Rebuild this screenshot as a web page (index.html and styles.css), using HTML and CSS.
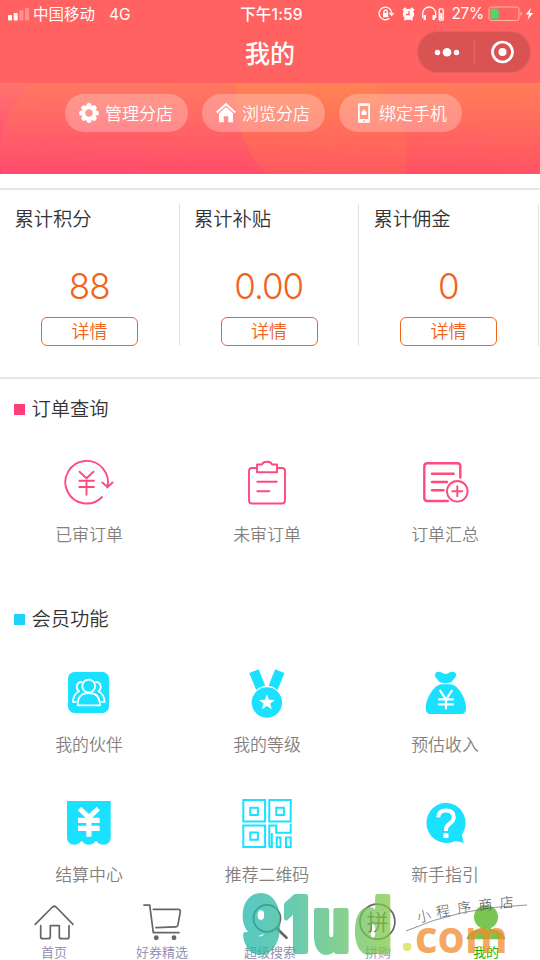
FILE: index.html
```
<!DOCTYPE html>
<html lang="zh-CN">
<head>
<meta charset="utf-8">
<title>我的</title>
<link rel="stylesheet" href="styles.css">
</head>
<body>
<div class="app">
  <header class="header">
    <div class="status">
      <div class="carrier">
        <svg width="22" height="14" viewBox="0 0 22 14" fill="#fff"><rect x="0" y="8" width="4" height="5.5" rx="1"/><rect x="5.7" y="6" width="4" height="7.5" rx="1"/><rect x="11.4" y="3.3" width="4" height="10.2" rx="1" opacity=".3"/><rect x="17" y="1" width="4" height="12.5" rx="1" opacity=".3"/></svg>
        <span>中国移动</span><span class="net">4G</span>
      </div>
      <div class="time">下午1:59</div>
      <div class="power">
        <svg class="sys" width="68" height="18" viewBox="0 0 68 18" fill="none" stroke="#fff" stroke-width="1.3">
          <path d="M11.5 13.2A6.3 6.3 0 1 1 13.7 8.5M11.5 7.8l2.2 2.4 2-2.4"/><rect x="5" y="7.8" width="5.2" height="4.4" fill="#fff" stroke="none"/><path d="M6 8V6.600a1.600 1.600 0 0 1 3.200 0V8"/>
          <circle cx="30.500" cy="9.300" r="5.600" fill="#fff" stroke="none"/><path d="M25 5.500l3-2.500M36 5.500l-3-2.500M26.500 15l1.500-1.500M34.500 15L33 13.500" stroke-width="2"/><path d="M31 6v3.500h-3" stroke="#ff6260"/>
          <path d="M44.700 13V8.500a6.500 6.500 0 0 1 13 0V13"/><path d="M46.800 10v5M55.700 10v5" stroke-width="2.400"/><rect x="61.200" y="3.800" width="4" height="11.400" rx="1"/><path d="M63.200 8v6" stroke-width="2"/>
        </svg>
        <span class="pct">27%</span>
        <svg width="47" height="16" viewBox="0 0 47 16"><rect x="1" y="1" width="30" height="13.500" rx="2.500" fill="none" stroke="#ffb3ad"/><rect x="2.600" y="2.700" width="8" height="10" rx="1" fill="#4cd964"/><path d="M32.500 5.500q3 2.200 0 4.500z" fill="#ffb3ad"/><path d="M43 2l-5.200 6.600h3.200L39.500 14l5.500-7h-3.300z" fill="#fff"/></svg>
      </div>
    </div>
    <div class="nav">
      <h1>我的</h1>
      <div class="capsule">
        <svg width="112" height="40" viewBox="1 0 112 40"><g fill="#fff"><circle cx="20.500" cy="20.500" r="2.700"/><circle cx="30" cy="20.200" r="4.300"/><circle cx="39.500" cy="20.500" r="2.700"/><circle cx="85.500" cy="20" r="4"/></g><path d="M57.300 8v24" stroke="#e66d6d"/><circle cx="85.500" cy="20" r="10" fill="none" stroke="#fff" stroke-width="2.700"/></svg>
      </div>
    </div>
  </header>

  <section class="banner">
    <button class="pill"><svg width="20" height="20" viewBox="0 0 20 20"><g stroke="#fff" stroke-width="5.200" stroke-linecap="round"><path d="M10 2.700v14.600M2.700 10h14.600M4.900 4.900l10.200 10.200M15.100 4.900L4.900 15.100"/></g><circle cx="10" cy="10" r="6.800" fill="#fff"/><circle cx="10" cy="10" r="3.700" fill="#ff9a90"/></svg><span>管理分店</span></button>
    <button class="pill"><svg width="20" height="20" viewBox="0 0 20 20"><path d="M.7 9.500L10 1.200l9.300 8.300" fill="none" stroke="#fff" stroke-width="2"/><path d="M3 10.200l7-6.300 7 6.300V19.200h-4.700v-6H7.700v6H3z" fill="#fff"/></svg><span>浏览分店</span></button>
    <button class="pill"><svg width="20" height="20" viewBox="0 0 20 20"><path d="M6.500.3h9q1.500 0 1.500 1.500v16.400q0 1.500-1.500 1.500h-9Q5 19.700 5 18.200V1.800Q5 .3 6.500.3zM6.800 3v13h8.400V3z" fill="#fff" fill-rule="evenodd"/><path d="M7.800 9.500L11 6.200l3.200 3.300h-.8V12H8.600V9.500z" fill="#fff"/><circle cx="11" cy="17.800" r=".9" fill="#ff9580"/></svg><span>绑定手机</span></button>
  </section>

  <section class="stats">
    <div class="stat"><h2>累计积分</h2><strong>88</strong><button>详情</button></div>
    <div class="stat"><h2>累计补贴</h2><strong>0.00</strong><button>详情</button></div>
    <div class="stat"><h2>累计佣金</h2><strong>0</strong><button>详情</button></div>
  </section>

  <section class="group orders">
    <h2>订单查询</h2>
    <div class="grid">
      <a class="item"><svg class="line" viewBox="0 0 60 60"><path d="M43 44A21.300 21.300 0 1 1 48.300 34.500M43.300 29.500l5.300 4.500 5-4.500M20.500 18.700l7 6.500 7-6.500M20.300 27.700h14.600M20.300 34h14.600M27.500 28v13.700"/></svg>已审订单</a>
      <a class="item"><svg class="line" viewBox="0 0 60 60"><path d="M20 15h-5q-3 0-3 3v29.500q0 3 3 3h30q3 0 3-3V18q0-3-3-3h-5"/><path d="M20 19.300v-7.800h5Q26 8.800 30 8.800t5 2.700h5v7.800zM20.300 28.700h19.500M20.300 38.300h12"/></svg>未审订单</a>
      <a class="item"><svg class="line thick" viewBox="0 0 60 60"><path d="M45.300 24.500V13.300q0-3-3-3h-30q-3 0-3 3V45q0 3 3 3h20.500M17 20.700h21.700M17 29h15M17 37.300h11.500"/><g stroke-width="1.900"><circle cx="42.300" cy="38.300" r="10.300"/><path d="M42.300 33.300v10M37.300 38.300h10"/></g></svg>订单汇总</a>
    </div>
  </section>

  <section class="group member">
    <h2>会员功能</h2>
    <div class="grid">
      <a class="item"><svg class="solid" viewBox="0 0 60 60"><rect x="9" y="9" width="41" height="41" rx="6.500"/><g fill="none" stroke="#fff" stroke-width="1.800" stroke-linecap="round" stroke-linejoin="round"><circle cx="29.700" cy="23" r="6.400"/><path d="M18.700 42.300Q18.500 30 29.700 30T41 42.300zM22.500 19c-5 0-6.300 6.500-2.400 9.300-4.500 2.200-5.800 5.700-6.300 10.500h3M37 19c5 0 6.300 6.500 2.400 9.300 4.500 2.200 5.800 5.700 6.300 10.500h-3"/></g></svg>我的伙伴</a>
      <a class="item"><svg class="solid" viewBox="0 0 60 60"><path d="M12.300 10l9.400-3.700 6.500 16.500q-5 .5-9 4.200zM47.500 10l-9.400-3.700-6.500 16.500q5 .5 9 4.200z"/><circle cx="29.900" cy="39.500" r="15.200"/><path d="M29.900 31.300l2 5.500 5.900.2-4.600 3.600 1.600 5.700-4.900-3.300-4.900 3.300 1.600-5.700-4.600-3.600 5.900-.2z" fill="#fff"/></svg>我的等级</a>
      <a class="item"><svg class="solid" viewBox="0 0 60 60"><path d="M24.800 19.300C22.500 16 20 15 20 12c0-2.500 2-3.500 4-3.300 3 .3 4.500 2.300 6.500 2.300S34 9 37 8.700c2-.2 4 .8 4 3.300 0 3-2.500 4-4.800 7.300-2 1-9.400 1-11.400 0z"/><path d="M26 21.300h10c8 1.500 15 15 15 23.700 0 4-2 6-5 6H15.700c-3 0-5-2-5-6C10.700 36.300 18 22.800 26 21.300z"/><path d="M24.700 27l6.300 9.500 6.300-9.500M23.300 36.300h15.400M23.300 41.300h15.400M31 36v10.300" fill="none" stroke="#fff" stroke-width="2.200"/></svg>预估收入</a>
      <a class="item"><svg class="solid" viewBox="0 0 60 60"><path d="M8 8h43.700v36c0 5-3 7.700-7 7.700-3 0-5.700-1.200-7.700-3.900-2 2.700-4.500 3.900-7.200 3.900s-5.100-1.200-7.100-3.900c-2 2.700-4.700 3.900-7.700 3.900-4 0-7-2.700-7-7.700z"/><path d="M20.500 15.500l9.400 9 9.400-9" fill="none" stroke="#fff" stroke-width="5"/><path d="M19 27.300h21.700M19 35.300h21.700M29.900 24v19.700" stroke="#fff" stroke-width="5.200"/></svg>结算中心</a>
      <a class="item"><svg class="qr" viewBox="0 0 60 60"><path d="M6.300 7.100h21.800v21.500H6.300zM32.300 7.100h21.400v21.500H32.300zM6.300 32.500h21.800V54H6.300zM13.300 14.700h7.600v7.200h-7.600zM39.300 14.700h7.600v7.200h-7.600zM13.300 39.500h7.600v7.200h-7.600zM32.300 54V32.500h6.900v7.300h14.500v-8.700M32.300 54h2.500v-14M39.700 44.600h3.800V54h-3.800zM49 44.600h4.700V54H49z"/></svg>推荐二维码</a>
      <a class="item"><svg class="solid" viewBox="0 0 60 60"><path d="M30.300 9.700a20.200 20.200 0 0 1 16.500 32l1.900 8-8.200-1.700A20.200 20.200 0 1 1 30.300 9.700z"/><path d="M23.200 24.300Q23.500 17.500 31 17.500q7.800 0 7.800 6.700 0 3.300-3.800 6.200-4 3-4 5.500v2" fill="none" stroke="#fff" stroke-width="4"/><rect x="28.500" y="40" width="5" height="5" fill="#fff"/></svg>新手指引</a>
    </div>
  </section>

  <nav class="tabs">
    <a><svg viewBox="0 0 44 44"><path d="M3.200 23.300L20.500 6q1.800-1.500 3.600 0L41 23.300M8.700 24.700v11q0 2 2 2h5.600q2 0 2-2V24.700h9v11q0 2 2 2H35q2 0 2-2v-11"/></svg>首页</a>
    <a><svg viewBox="0 0 44 44"><path d="M4 4.200h5.700l3.600 27.500H39M13.300 8.300h25q2.300 0 2 2.500l-2.300 12.700q-.3 2.300-2.500 2.400L16 26.700"/><circle cx="16.300" cy="36.700" r="1.600" fill="#666"/><circle cx="34" cy="36.700" r="1.600" fill="#666"/></svg>好券精选</a>
    <a><svg viewBox="0 0 44 44"><circle cx="19" cy="17.300" r="13.500"/><path d="M29.500 28l9 8.800" stroke-width="2.600"/></svg>超级搜索</a>
    <a><svg viewBox="0 0 44 44"><circle cx="21.400" cy="20.700" r="17.500"/><text x="21.500" y="28.500" text-anchor="middle">拼</text></svg>拼购</a>
    <a class="active"><svg viewBox="0 0 44 44"><circle cx="22" cy="16" r="12"/><path d="M17 25h10v3c6 .500 13 3 14.500 10.300h-39C4 31 11 28.500 17 28z"/></svg>我的</a>
  </nav>

  <svg class="watermark" viewBox="0 0 300 70">
    <defs><linearGradient id="wm" gradientUnits="userSpaceOnUse" x1="0" y1="0" x2="205" y2="0"><stop offset="0" stop-color="#1fb8ae"/><stop offset=".35" stop-color="#38b995"/><stop offset="1" stop-color="#86c844"/></linearGradient></defs>
    <g opacity=".75">
      <text class="brand" transform="translate(0 60.500) scale(.74 1)" x="4 59 99.500 156" y="0">91ud</text>
      <text class="dot" x="160" y="61">.</text>
      <text class="com" x="175" y="62.500" textLength="93" lengthAdjust="spacingAndGlyphs">com</text>
    </g>
    <path d="M166 41Q220 17 287 15" fill="none" stroke="#777" stroke-width=".8"/>
    <text class="script" x="178 197 218 239 260" y="32.500 27.500 23.500 20.500 18" rotate="-12 -10 -8 -6 -4">小程序商店</text>
  </svg>
</div>
</body>
</html>
```
FILE: styles.css
```
* { box-sizing: border-box; }
body { margin: 0; background: #fff; font-family: Inter, "Noto Sans CJK SC", sans-serif; font-weight: 350; color: #333; }
h1, h2 { margin: 0; font-weight: inherit; }
button { border: 0; background: none; padding: 0; font: inherit; color: inherit; }
svg { display: block; flex: none; }
.app { position: relative; width: 540px; height: 960px; overflow: hidden; display: flex; flex-direction: column; }

.header { height: 83px; flex: none; background: #ff6260; color: #fff; }
.status { height: 27px; display: grid; grid-template-columns: 1fr auto 1fr; align-items: center; font-size: 15.500px; padding: 0 5px 0 8px; }
.carrier { display: flex; align-items: center; gap: 3px; font-weight: 400; }
.carrier span { margin-top: -1px; }
.carrier .net { margin: 1px 0 0 11px; }
.time { font-weight: 500; letter-spacing: .2px; margin-top: -2px; }
.power { display: flex; align-items: center; justify-content: flex-end; font-weight: 400; }
.pct { margin: 0 4px 0 5px; letter-spacing: -.3px; }
.nav { height: 53px; position: relative; display: flex; align-items: center; justify-content: center; }
.nav h1 { font-size: 25px; line-height: 36px; font-weight: 500; }
.capsule { position: absolute; right: 10px; top: 5px; width: 112px; height: 40px; border-radius: 20px; background: #d95353; box-shadow: 0 0 0 1px #e56060; }

.banner { position: relative; height: 91px; flex: none; overflow: hidden; display: flex; justify-content: center; gap: 14px; padding: 11px 14px 0 0; background: linear-gradient(90deg, #ff6a4800 0, #ff6a4830 100%), linear-gradient(#ff746c, #ff3f76); }
.banner::before, .banner::after { content: ""; position: absolute; }
.banner::before { left: 0; top: -19px; width: 407px; height: 180px; border-radius: 88px; background: linear-gradient(#ff904036, #ff804022); }
.banner::after { left: 236px; top: -110px; width: 420px; height: 232px; border-radius: 106px; background: linear-gradient(#ffa0303c 50%, #ff903024 90%); }
.pill { position: relative; z-index: 1; width: 123px; height: 38px; border-radius: 19px; background: #ffffff42; color: #fff; font-size: 17px; display: flex; align-items: center; justify-content: center; gap: 6px; }
.pill span { margin-top: -2px; }

.stats { height: 191px; flex: none; margin-top: 14px; padding: 14px 0 0; border-top: 2px solid #e7e7e7; border-bottom: 2px solid #e7e7e7; display: flex; }
.stat { width: 179.500px; height: 142px; flex: none; border-right: 1.500px solid #e0e0e0; display: flex; flex-direction: column; align-items: center; }
.stat h2 { align-self: flex-start; padding-left: 14.500px; font-size: 19.300px; line-height: 30px; }
.stat strong { margin-top: 30px; font-size: 35px; line-height: 44px; font-weight: 300; letter-spacing: -1px; color: #f0641e; }
.stat button { margin: 9px 0 0 .6px; width: 97px; height: 29px; border: 1.500px solid #f0641e; border-radius: 6px; color: #f0641e; font-size: 18px; line-height: 26px; }

.group { flex: none; }
.group h2 { display: flex; align-items: center; gap: 6.500px; padding-left: 14px; height: 30px; font-size: 19.300px; }
.group h2::before { content: ""; width: 11px; height: 11px; margin-top: 3px; background: var(--tone); }
.orders { --tone: #ff3d76; height: 210px; padding-top: 14px; }
.member { --tone: #20d0ff; height: 290px; padding-top: 14px; }
.grid { width: 534px; display: grid; grid-template-columns: repeat(3, 178px); grid-auto-rows: 130px; padding-top: 30px; }
.item { display: flex; flex-direction: column; align-items: center; gap: 9px; font-size: 16.900px; line-height: 26px; color: #857f7d; }
.item svg { width: 60px; height: 60px; }
.line { fill: none; stroke: #ff4a80; stroke-width: 1.900; stroke-linecap: round; stroke-linejoin: round; }
.thick { stroke-width: 2.400; }
.solid { fill: #19e1ff; }
.qr { fill: none; stroke: #19e1ff; stroke-width: 2; }

.tabs { display: grid; grid-template-columns: repeat(5, 108px); position: absolute; left: 0; bottom: 0; height: 59px; }
.tabs a { display: flex; flex-direction: column; align-items: center; font-size: 13px; line-height: 14px; color: #8a8aad; }
.tabs svg { width: 44px; height: 44px; fill: none; stroke: #666; stroke-width: 1.700; stroke-linecap: round; stroke-linejoin: round; }
.tabs text { font-size: 22px; fill: #555; stroke: none; }
.tabs .active { color: #12b800; font-weight: 400; }
.tabs .active svg { fill: #78c651; stroke: none; }

.watermark { position: absolute; left: 240px; top: 890px; width: 300px; height: 70px; pointer-events: none; }
.brand { font: 900 74px Inter, sans-serif; fill: url(#wm); stroke: url(#wm); stroke-width: 6; stroke-linejoin: round; }
.dot { font: 700 50px "Open Sans", sans-serif; fill: #d5e04d; }
.com { font: 700 44px "Open Sans", sans-serif; fill: #f18c2d; }
.script { font: 300 14px "Noto Sans CJK SC", sans-serif; fill: #555; }
```
